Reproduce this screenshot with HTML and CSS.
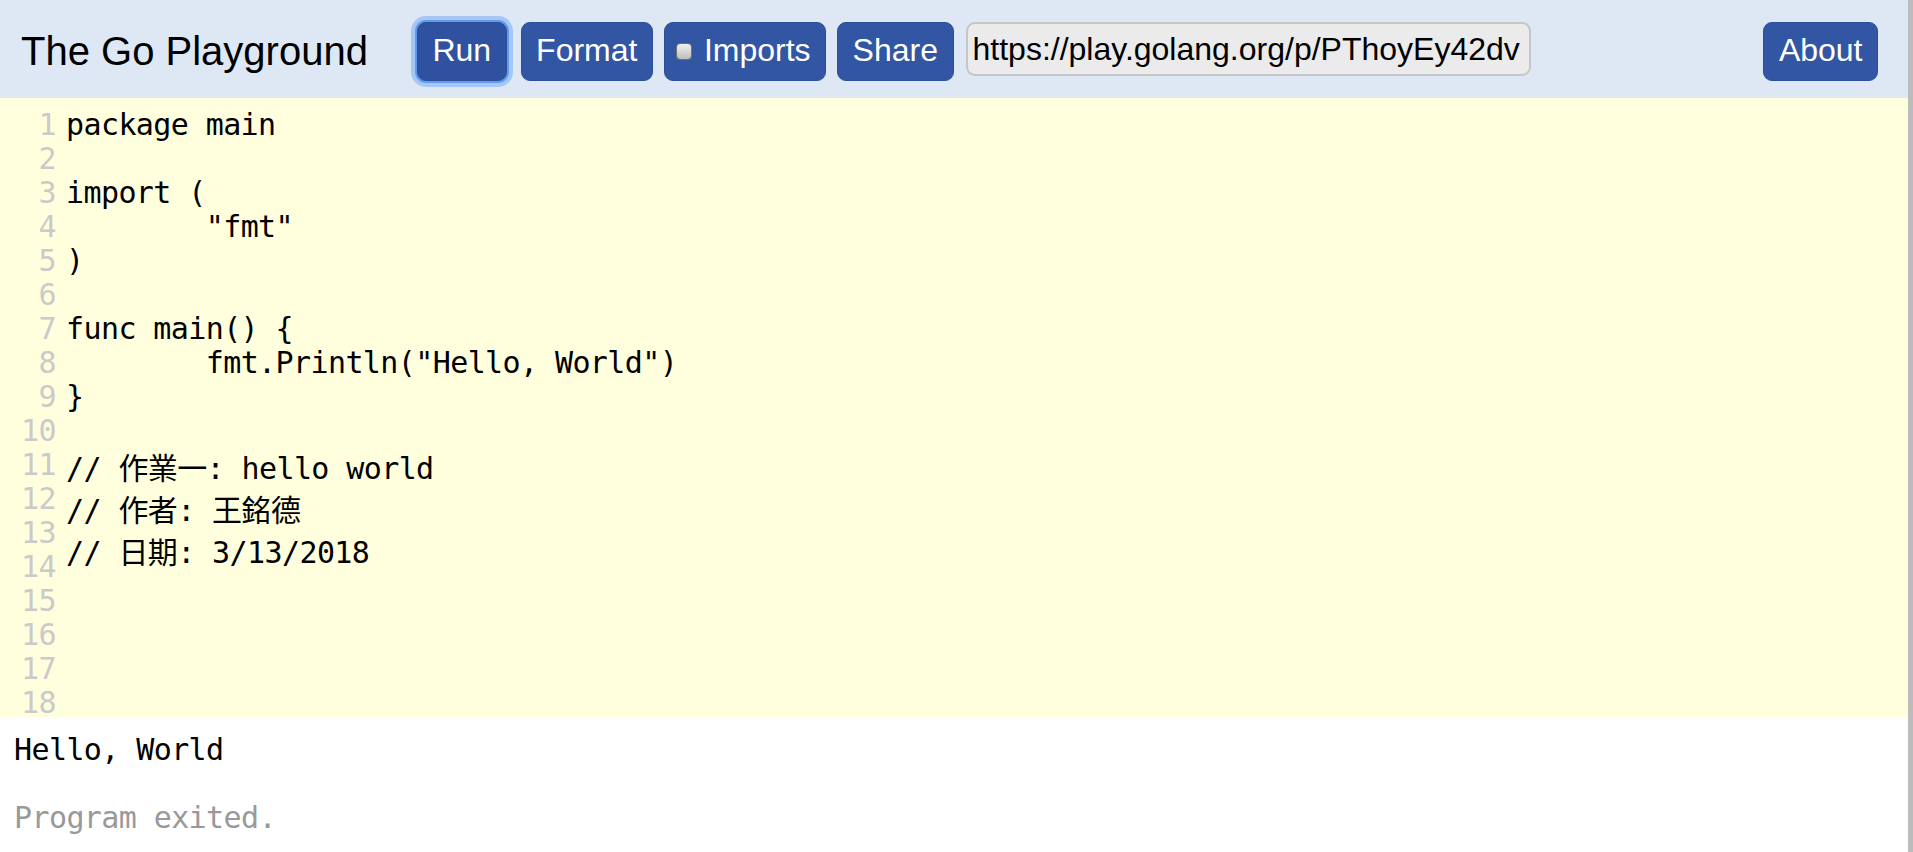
FILE: index.html
```html
<!DOCTYPE html>
<html lang="en">
<head>
    <meta charset="UTF-8">
    <title>The Go Playground</title>
    <link rel="stylesheet" href="styles.css">
</head>
<body>
    <div class="page">
        <header class="topbar">
            <div class="title">The Go Playground</div>
            <div class="controls">
                <button class="btn btn-focus">Run</button>
                <button class="btn">Format</button>
                <label class="btn imports"><input type="checkbox" class="check">Imports</label>
                <button class="btn">Share</button>
                <input class="share-url" type="text" value="https://play.golang.org/p/PThoyEy42dv">
            </div>
            <button class="btn about">About</button>
        </header>

        <div class="editor">
            <div class="gutter">
                <div>1</div><div>2</div><div>3</div><div>4</div><div>5</div><div>6</div>
                <div>7</div><div>8</div><div>9</div><div>10</div><div>11</div><div>12</div>
                <div>13</div><div>14</div><div>15</div><div>16</div><div>17</div><div>18</div>
            </div>
            <div class="code">
                <div class="ln">package main</div>
                <div class="ln"></div>
                <div class="ln">import (</div>
                <div class="ln">	"fmt"</div>
                <div class="ln">)</div>
                <div class="ln"></div>
                <div class="ln">func main() {</div>
                <div class="ln">	fmt.Println("Hello, World")</div>
                <div class="ln">}</div>
                <div class="ln"></div>
                <div class="ln wide">// 作業一: hello world</div>
                <div class="ln wide">// 作者: 王銘德</div>
                <div class="ln wide">// 日期: 3/13/2018</div>
                <div class="ln"></div>
                <div class="ln"></div>
            </div>
        </div>

        <div class="output">
            <div class="out-line">Hello, World</div>
            <div class="out-line"></div>
            <div class="out-line system">Program exited.</div>
        </div>
    </div>
</body>
</html>
```

FILE: styles.css
```css
html, body {
    margin: 0;
    padding: 0;
    height: 100%;
    background: #fff;
}
.page {
    height: 100vh;
    display: flex;
    flex-direction: column;
    border-right: 5px solid #bcbcbc;
    box-sizing: border-box;
    overflow: hidden;
}
.topbar {
    height: 98px;
    flex: none;
    box-sizing: border-box;
    padding: 5px 30px 0 21px;
    display: flex;
    align-items: center;
    background-color: #dde8f4;
    font-family: 'Liberation Sans', Arial, sans-serif;
}
.title {
    font-size: 40px;
    color: #000;
    margin-right: 49px;
    white-space: nowrap;
}
.controls {
    display: flex;
    align-items: center;
    gap: 11px;
}
.btn {
    height: 59px;
    box-sizing: border-box;
    padding: 0 14.5px 3px;
    display: inline-flex;
    align-items: center;
    font-family: 'Liberation Sans', Arial, sans-serif;
    font-size: 32px;
    color: #fff;
    background-color: #3256a4;
    border: 1px solid #2d4f98;
    border-radius: 9px;
    cursor: pointer;
    white-space: nowrap;
}
.btn-focus {
    margin-right: 3px;
    background-color: #2f51a0;
    box-shadow: 0 0 0 2px #5f9cf0, 0 0 0 6px rgba(120, 172, 245, 0.55);
}
.imports {
    padding-left: 11px;
}
.check {
    appearance: none;
    -webkit-appearance: none;
    width: 16px;
    height: 17px;
    margin: 2px 12px 0 0;
    border: 1px solid #6f6f6f;
    border-radius: 4px;
    background: linear-gradient(#f2f2f2, #bdbdbd);
    box-sizing: border-box;
}
.share-url {
    width: 565px;
    height: 54px;
    box-sizing: border-box;
    margin-left: 1px;
    margin-bottom: 5px;
    padding: 0 5px;
    font-family: 'Liberation Sans', Arial, sans-serif;
    font-size: 32px;
    color: #000;
    background-color: #ebebeb;
    border: 2px solid #c6c6c6;
    border-radius: 9px;
    outline: none;
}
.about {
    margin-left: auto;
}
.editor {
    height: 619px;
    flex: none;
    box-sizing: border-box;
    padding-top: 10px;
    display: flex;
    overflow: hidden;
    background-color: #ffffdd;
    font-family: 'DejaVu Sans Mono', 'Noto Sans CJK TC', monospace;
    font-size: 30px;
    letter-spacing: -0.6px;
    line-height: 34px;
}
.gutter {
    width: 56px;
    flex: none;
    text-align: right;
    color: #cacaca;
}
.code {
    padding-left: 10px;
    color: #000;
}
.ln {
    height: 34px;
    white-space: pre;
    tab-size: 8;
}
.ln.wide {
    height: 42px;
    line-height: 42px;
}
.output {
    flex: 1;
    padding: 16px 14px 0;
    background: #fff;
    color: #000;
    font-family: 'DejaVu Sans Mono', monospace;
    font-size: 30px;
    letter-spacing: -0.6px;
    line-height: 34px;
}
.out-line {
    height: 34px;
    white-space: pre;
}
.system {
    color: #999;
}
```
